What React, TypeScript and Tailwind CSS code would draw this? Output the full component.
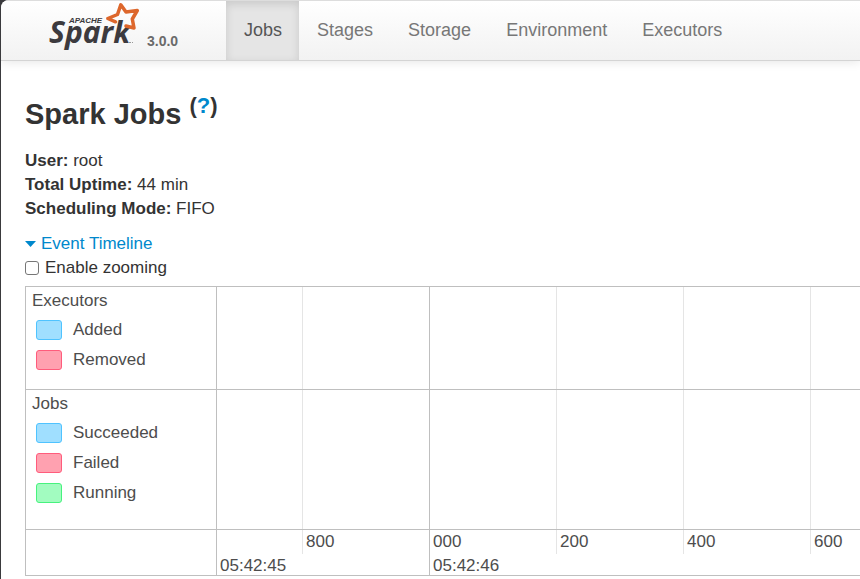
import React from 'react';

const TABS = ['Jobs', 'Stages', 'Storage', 'Environment', 'Executors'];

const GROUPS = [
  {
    name: 'Executors',
    padding: 'pb-[14px]',
    items: [
      { label: 'Added', swatch: 'bg-[#a0dfff] border-[#4fc3ff]' },
      { label: 'Removed', swatch: 'bg-[#ffa1b0] border-[#ff5c7c]' },
    ],
  },
  {
    name: 'Jobs',
    padding: 'pb-[21px]',
    items: [
      { label: 'Succeeded', swatch: 'bg-[#a0dfff] border-[#4fc3ff]' },
      { label: 'Failed', swatch: 'bg-[#ffa1b0] border-[#ff5c7c]' },
      { label: 'Running', swatch: 'bg-[#a2fcc0] border-[#47f27e]' },
    ],
  },
];

// major ticks carry the full clock time under the milliseconds
const TICKS = [
  { minor: '', major: '05:42:45', width: 'w-[86px]' },
  { minor: '800', major: '', width: 'w-[127px]' },
  { minor: '000', major: '05:42:46', width: 'w-[127px]' },
  { minor: '200', major: '', width: 'w-[127px]' },
  { minor: '400', major: '', width: 'w-[127px]' },
  { minor: '600', major: '', width: 'w-[127px]' },
];

const SparkLogo: React.FC = () => (
  <svg width="96" height="54" viewBox="0 0 96 54" role="img" aria-label="Apache Spark">
    <text x="3" y="42" fontFamily="'Open Sans', sans-serif" fontSize="30" fontWeight="700" fontStyle="italic" fill="#3c3a3e">
      Spark
    </text>
    <text x="23" y="22" fontFamily="'Liberation Sans', sans-serif" fontSize="8" fontWeight="700" fontStyle="italic" fill="#3c3a3e">
      APACHE
    </text>
    <path
      d="M69.500 20.800 L61.800 17.500 L71.500 13.500 L74.800 3.800 L80 11 L91.300 9.500 L86.300 18 L88 27 L80 25"
      fill="none"
      stroke="#dd672c"
      strokeWidth="3.500"
      strokeLinejoin="round"
      strokeLinecap="round"
    />
    <path d="M83 41.500h2M86 41.500h1" stroke="#999999" strokeWidth="1" />
  </svg>
);

const Header: React.FC = () => (
  <header className="flex border-t border-b border-t-[#dddddd] border-b-[#d4d4d4] bg-linear-to-b from-white to-[#f2f2f2] shadow-[0_1px_10px_rgba(0,0,0,0.1)]">
    <a href="#" className="flex w-[225px] shrink-0 items-start pl-[45px] text-[14px] font-bold text-[#6a6a6a]">
      <SparkLogo />
      <span className="ml-[5px] mt-[30px] leading-5">3.0.0</span>
    </a>
    <nav className="flex text-[18px] leading-[59px] text-[#777777]">
      {TABS.map((tab, i) => (
        <a
          key={tab}
          href="#"
          className={`pl-[18px] pr-[17px] ${i === 0 ? 'bg-[#e5e5e5] text-[#555555] shadow-[inset_0_3px_8px_rgba(0,0,0,0.125)]' : ''}`}
        >
          {tab}
        </a>
      ))}
    </nav>
  </header>
);

const Timeline: React.FC = () => (
  <div className="overflow-hidden border-t border-l border-[#bfbfbf] text-[#4d4d4d]">
    {GROUPS.map(group => (
      <div key={group.name} className="flex border-b border-[#bfbfbf]">
        <div className={`w-[190px] shrink-0 pt-[2px] pl-[6px] ${group.padding}`}>
          <div className="mb-[2px]">{group.name}</div>
          {group.items.map(item => (
            <div key={item.label} className="flex h-[30px] items-center gap-[11px] pl-1">
              <span className={`h-5 w-[26px] rounded-[3px] border ${item.swatch}`}></span>
              {item.label}
            </div>
          ))}
        </div>
        {TICKS.map((tick, i) => (
          <div
            key={i}
            className={`shrink-0 border-l ${tick.width} ${tick.major ? 'border-[#bfbfbf]' : 'border-[#e5e5e5]'}`}
          ></div>
        ))}
      </div>
    ))}
    <div className="flex border-b border-[#bfbfbf] leading-6">
      <div className="w-[190px] shrink-0"></div>
      {TICKS.map((tick, i) => (
        <div key={i} className={`shrink-0 ${tick.width} ${tick.major ? 'border-l border-[#bfbfbf]' : ''}`}>
          <div className={`h-6 pl-[3px] ${tick.major ? '' : 'border-l border-[#e5e5e5]'}`}>{tick.minor}</div>
          <div className="h-[21px] pl-[3px]">{tick.major}</div>
        </div>
      ))}
    </div>
  </div>
);

export default function App() {
  return (
    <div className="min-h-screen overflow-hidden bg-[#3a3a3d] pl-px font-['Liberation_Sans',Arial,sans-serif] text-[17px] leading-6 text-[#333333]">
      <div className="min-h-screen overflow-hidden rounded-tl-lg bg-white">
        <Header />
        <main className="pl-6">
          <h3 className="mt-[29px] mb-[11px] text-[29px] leading-[48px] font-bold">
            Spark Jobs{' '}
            <sup className="text-[22px] leading-none">
              (<a href="#" className="text-[#0088cc]">?</a>)
            </sup>
          </h3>
          <ul>
            <li><strong>User:</strong> root</li>
            <li><strong>Total Uptime:</strong> 44 min</li>
            <li><strong>Scheduling Mode:</strong> FIFO</li>
          </ul>
          <button type="button" className="mt-[11px] flex items-center gap-[5px] text-[#0088cc]">
            <svg width="11" height="6" viewBox="0 0 11 6" aria-hidden="true">
              <path d="M0 0h11L5.500 6z" fill="currentColor" />
            </svg>
            Event Timeline
          </button>
          <label className="mb-[6px] flex items-center gap-[6px]">
            <input type="checkbox" className="h-[14px] w-[14px] appearance-none rounded-[3px] border border-[#767676] bg-white" />
            Enable zooming
          </label>
          <Timeline />
        </main>
      </div>
    </div>
  );
}
